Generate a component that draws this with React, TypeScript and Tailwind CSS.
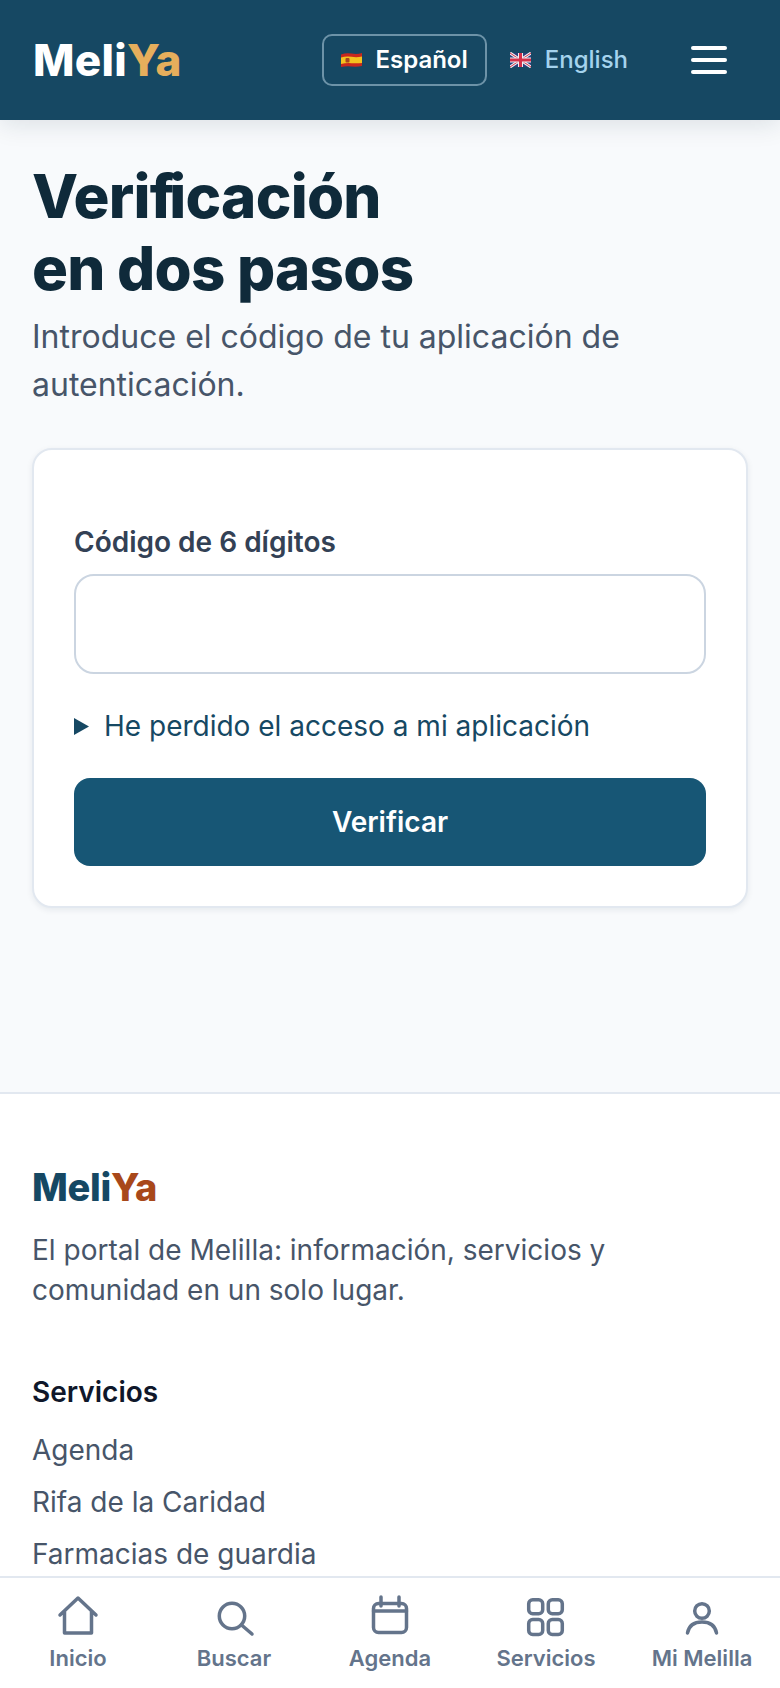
const FONT = "font-['Inter',sans-serif]";

function FlagES() {
  return (
    <svg width="21" height="16" viewBox="0 0 21 16" className="shrink-0">
      <path d="M0 2.5 Q5 0.5 10.5 1.5 T21 1 V14 Q16 15 10.5 14.5 T0 15 Z" fill="#c8281e" />
      <path d="M0 5.5 Q5 4 10.5 4.8 T21 4.5 V11 Q16 11.6 10.5 11.2 T0 12 Z" fill="#f4c21f" />
      <rect x="4.5" y="6" width="4" height="4.5" rx="1" fill="#a8451f" />
    </svg>
  );
}

function FlagUK() {
  return (
    <svg width="21" height="16" viewBox="0 0 21 16" className="shrink-0">
      <rect x="0" y="1" width="21" height="14" fill="#2d3f7c" />
      <path d="M0 1 L21 15 M21 1 L0 15" stroke="#eef0f4" strokeWidth="3" />
      <path d="M0 1 L21 15 M21 1 L0 15" stroke="#d5304a" strokeWidth="1" />
      <path d="M10.5 1 V15 M0 8 H21" stroke="#eef0f4" strokeWidth="5" />
      <path d="M10.5 1 V15 M0 8 H21" stroke="#d5304a" strokeWidth="3" />
    </svg>
  );
}

function NavIcon({ children }: { children: React.ReactNode }) {
  return (
    <svg
      width="44"
      height="44"
      viewBox="0 0 44 44"
      fill="none"
      stroke="#64748b"
      strokeWidth="3.5"
      strokeLinecap="round"
      strokeLinejoin="round"
    >
      {children}
    </svg>
  );
}

function NavItem({ icon, label }: { icon: React.ReactNode; label: string }) {
  return (
    <div className="flex flex-1 flex-col items-center">
      <div className="h-[44px] flex items-center justify-center">{icon}</div>
      <span className="mt-[6px] text-[22px] leading-[28px] font-semibold text-[#64748b]">{label}</span>
    </div>
  );
}

export default function App() {
  return (
    <div className={`${FONT} flex h-screen flex-col overflow-hidden bg-white`}>
      <div className="flex-1 overflow-hidden">
        <header className="relative z-10 flex h-[120px] items-center bg-[#164863] pl-[33px] pr-[53px] shadow-[0_4px_24px_rgba(15,42,58,0.12)]">
          <div className="text-[44px] font-extrabold tracking-[0.3px] text-white">
            Meli<span className="text-[#e6ae5c]">Ya</span>
          </div>
          <div className="ml-auto flex items-center">
            <div className="flex h-[52px] items-center gap-[13px] rounded-[10px] border-2 border-[#6d93a8] px-[17px] text-[24px] font-semibold text-white">
              <FlagES />
              Español
            </div>
            <div className="ml-[6px] flex h-[52px] items-center gap-[14px] px-[17px] text-[24px] font-medium text-[#a5d3ed]">
              <FlagUK />
              English
            </div>
          </div>
          <div className="ml-[46px] flex flex-col gap-[8px]">
            <div className="h-[4px] w-[36px] rounded-full bg-white" />
            <div className="h-[4px] w-[36px] rounded-full bg-white" />
            <div className="h-[4px] w-[36px] rounded-full bg-white" />
          </div>
        </header>

        <main className="bg-[#f8fafc] px-[32px] pt-[40px] pb-[184px]">
          <h1 className="text-[60px] leading-[72px] font-extrabold tracking-[-0.75px] text-[#0f2a3a]">
            Veri<span className="tracking-[-5px]">f</span>icación
            <br />
            en dos pasos
          </h1>
          <p className="mt-[9px] text-[32px] leading-[48px] text-[#475569]">
            Introduce el código de tu aplicación de autenticación.
          </p>
          <div className="mt-[39px] rounded-[20px] border-2 border-[#e2e8f0] bg-white px-[40px] pt-[74px] pb-[40px] shadow-[0_2px_6px_rgba(15,42,58,0.08)]">
            <div className="text-[28px] leading-[36px] font-semibold text-[#334155]">Código de 6 dígitos</div>
            <div className="mt-[14px] h-[100px] rounded-[20px] border-2 border-[#cbd5e1] bg-white" />
            <div className="mt-[32px] flex items-center text-[28px] leading-[40px] text-[#164863]">
              <svg width="16" height="17" viewBox="0 0 16 17" className="shrink-0">
                <path d="M0 0 L15 8.5 L0 17 Z" fill="#164863" />
              </svg>
              <span className="ml-[14px]">He perdido el acceso a mi aplicación</span>
            </div>
            <div className="mt-[32px] flex h-[88px] items-center justify-center rounded-[16px] bg-[#175675] text-[28px] font-semibold text-white">
              Verificar
            </div>
          </div>
        </main>

        <footer className="border-t-2 border-[#e2e8f0] bg-white px-[32px] pt-[70px]">
          <div className="text-[38px] leading-[46px] font-extrabold tracking-[-0.3px] text-[#164863]">
            Meli<span className="text-[#a8481a]">Ya</span>
          </div>
          <p className="mt-[20px] text-[28px] leading-[40px] text-[#475569]">
            El portal de Melilla: información, servicios y comunidad en un solo lugar.
          </p>
          <div className="mt-[64px] text-[28px] leading-[36px] font-semibold text-[#0f172a]">Servicios</div>
          <ul className="mt-[14px] text-[28px] leading-[52px] text-[#475569]">
            <li>Agenda</li>
            <li>Rifa de la Caridad</li>
            <li>Farmacias de guardia</li>
          </ul>
        </footer>
      </div>

      <nav className="flex h-[112px] shrink-0 border-t-2 border-[#e2e8f0] bg-white pt-[16px]">
        <NavItem
          label="Inicio"
          icon={
            <NavIcon>
              <path d="M4 21 L22 4 L40 21 M8.5 17 V39 H35.5 V17" />
            </NavIcon>
          }
        />
        <NavItem
          label="Buscar"
          icon={
            <NavIcon>
              <circle cx="20" cy="22" r="12.7" />
              <path d="M29.5 31 L40 40" />
            </NavIcon>
          }
        />
        <NavItem
          label="Agenda"
          icon={
            <NavIcon>
              <rect x="5.5" y="9.5" width="33" height="29" rx="5" />
              <path d="M5.5 17 H38.5 M13 3 V12 M31 3 V12" />
            </NavIcon>
          }
        />
        <NavItem
          label="Servicios"
          icon={
            <NavIcon>
              <rect x="4.7" y="5.7" width="14" height="14" rx="4" />
              <rect x="24.3" y="5.7" width="14" height="14" rx="4" />
              <rect x="4.7" y="25.5" width="14" height="15" rx="4" />
              <rect x="24.3" y="25.5" width="14" height="15" rx="4" />
            </NavIcon>
          }
        />
        <NavItem
          label="Mi Melilla"
          icon={
            <NavIcon>
              <circle cx="22" cy="17" r="7.3" />
              <path d="M7.5 39 C9 31 15 28 22 28 C29 28 35 31 36.5 39" />
            </NavIcon>
          }
        />
      </nav>
    </div>
  );
}
